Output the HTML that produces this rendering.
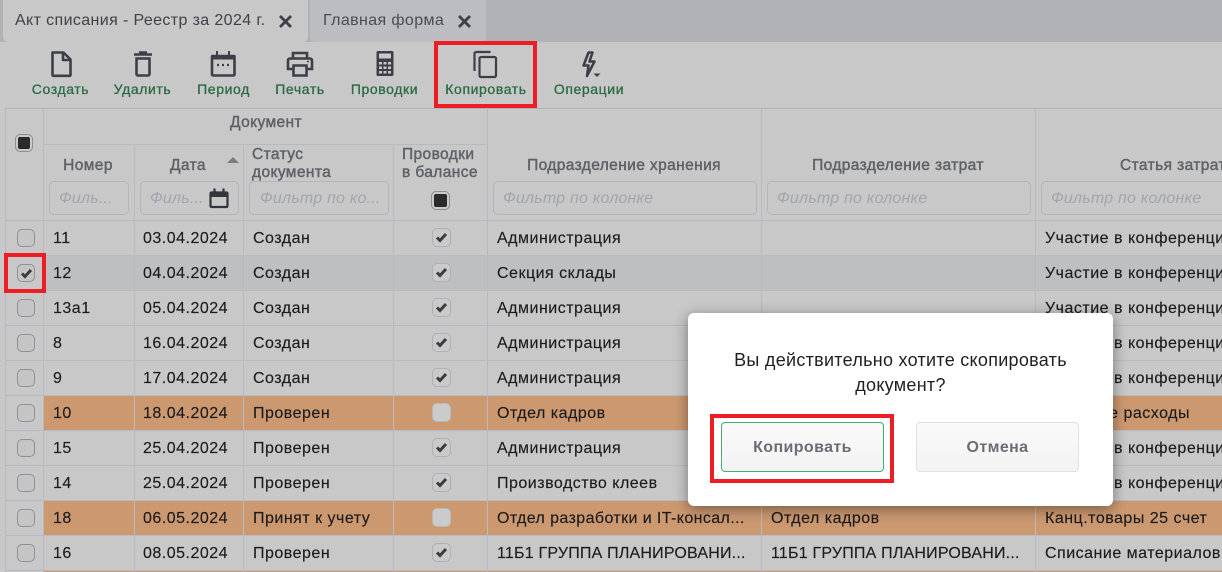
<!DOCTYPE html>
<html lang="ru"><head><meta charset="utf-8"><title>Акт списания</title>
<style>
html,body{margin:0;padding:0}
body{width:1222px;height:572px;overflow:hidden;position:relative;background:#c8c8c8;font-family:"Liberation Sans","Noto Sans CJK SC",sans-serif;font-size:16px;color:#1c1c1c}
.a{position:absolute;white-space:nowrap}
.tabbar{left:0;top:0;width:1222px;height:42px;background:#b0b2b5}
.tab{top:0;height:42px;background:#bcbdc0;border-radius:0 0 5px 5px;line-height:42px;color:#45484f;font-size:16px;letter-spacing:.38px}
.lb{top:81px;height:16px;line-height:16px;transform:translateX(-50%);font-size:14px;letter-spacing:.6px;color:#2b6a45;-webkit-text-stroke:.3px #2b6a45}
.v{width:1px;background:#b9bac0}
.h{height:1px;background:#b9bac0;left:5px;width:1217px}
.hd{font-size:15.5px;letter-spacing:.4px;color:#5f6268;-webkit-text-stroke:.45px #5f6268;line-height:18px}
.c{transform:translateX(-50%)}
.f{top:181px;height:32px;border:1px solid #b4b6be;border-radius:5px;line-height:34px;font-style:italic;color:#a2a5ad;font-size:16px;letter-spacing:.2px;padding-left:9px;overflow:hidden}
.row{position:absolute;left:44px;width:1178px;height:34px;line-height:35px}
.row span{position:absolute;white-space:nowrap;top:0;letter-spacing:.5px;-webkit-text-stroke:.15px #1c1c1c}
.g{background:#c8c8c8}.s{background:#bebfc1}.o{background:#cc9870}
.n{left:9px}.d{left:99px}.st{left:209px}.p1{left:453px}.p2{left:727px}.p3{left:1001px}
.row .u{letter-spacing:.2px}
.row .t{letter-spacing:.4px}
.cb{position:absolute;left:17px;width:16px;height:16px;border:1px solid #8f9095;border-radius:5px;background:#c5c5c5}
.bb{position:absolute;left:432px;width:17px;height:17px;border:1px solid #b0b1b7;border-radius:5px;background:#cacaca}
.bo{border-color:#b8b8bc;background:#cbcbcb}
.cb svg,.bb svg{position:absolute;left:1px;top:1px;width:15px;height:15px}
.ind{width:16px;height:16px;border:1px solid #8d8e93;border-radius:5px;background:#c9c9c9}
.ind i{position:absolute;left:2px;top:2px;width:12px;height:12px;background:#2a2a2b;border-radius:2px}
.red{border:4px solid #ee1c25;box-sizing:border-box}
.modal{left:688px;top:313px;width:425px;height:193px;background:#fff;border-radius:6px;box-shadow:0 3px 14px rgba(0,0,0,.42)}
.btn{top:422px;width:163px;height:50px;box-sizing:border-box;border-radius:4px;background:linear-gradient(#fafafa,#f3f3f4);text-align:center;line-height:49px;font-size:16px;font-weight:bold;letter-spacing:.4px;color:#6a6d74}
</style></head><body>
<div class="a tabbar"></div>
<div class="a tab" style="left:3px;width:305px;background:#c8c8c8;padding-left:12px;box-sizing:border-box;color:#3f4148">Акт списания - Реестр за 2024 г.</div>
<div class="a tab" style="left:310px;width:176px;padding-left:13px;box-sizing:border-box;color:#494c53">Главная форма</div>
<svg class="a" style="left:0;top:0" width="500" height="42"><path d="M280 16l11 11M291 16l-11 11M459 16l11 11M470 16l-11 11" stroke="#3f4148" stroke-width="2.8" fill="none"/></svg>

<svg class="a" style="left:0;top:42px" width="640" height="40" fill="none" stroke="#3d3f47" stroke-width="2.6">
<path d="M52.500 10.500h11l7 7v15.500a.8.8 0 0 1-.8.8h-16.400a.8.8 0 0 1-.8-.8zM63 10v8h8" stroke-linejoin="round"/>
<path d="M134 12.500h18M139 10.500h8" /><path d="M136.500 16.500h13v15.500a1.500 1.500 0 0 1-1.500 1.500h-10a1.500 1.500 0 0 1-1.500-1.500z"/>
<path d="M212.500 14h21.500a.5.5 0 0 1 .5.5V32.500a1 1 0 0 1-1 1h-20.500a1 1 0 0 1-1-1V14.500a.5.5 0 0 1 .5-.5z"/><path d="M212 14h22v3.500h-22z" fill="#3d3f47" stroke="none"/><path d="M217 9v5M229 9v5" stroke-width="2"/><path d="M217 23h2M222 23h2M227 23h2" stroke-width="2.200"/>
<path d="M293 17v-6h14v6M293 27h-5v-8.500a2 2 0 0 1 2-2h20a2 2 0 0 1 2 2V27h-5"/><path d="M293.500 23.500h13v10h-13z"/><path d="M307 19.500h2" stroke-width="1.500"/>
<path d="M378 9h14a1.500 1.500 0 0 1 1.500 1.500v22a1.500 1.500 0 0 1-1.500 1.500h-14a1.500 1.500 0 0 1-1.500-1.500v-22A1.500 1.500 0 0 1 378 9z" fill="#3d3f47" stroke="none"/>
<path d="M379 11.500h12v5h-12zM379 20h3v2.500h-3zM383.500 20h3v2.500h-3zM388 20h3v2.500h-3zM379 24.500h3v2.500h-3zM383.500 24.500h3v2.500h-3zM388 24.500h3v2.500h-3zM379 29h3v2.500h-3zM383.500 29h3v2.500h-3zM388 29h3v2.500h-3z" fill="#c8c8c8" stroke="none"/>
<path d="M490.500 10H476a1.500 1.500 0 0 0-1.500 1.500V29" stroke-width="2.200"/><path d="M481 15h13.500a1.500 1.500 0 0 1 1.500 1.500v17a1.500 1.500 0 0 1-1.500 1.500H481a1.500 1.500 0 0 1-1.500-1.500v-17A1.500 1.500 0 0 1 481 15z" stroke-width="2.200"/>
<path d="M588.500 10.500l-5 13h5l-1.500 10.500 7.500-14.500h-5l3-9z" stroke-width="2.500" stroke-linejoin="round"/>
<path d="M593.500 31.500h7l-3.500 3.500z" fill="#3d3f47" stroke="none"/>
</svg>
<div class="a lb" style="left:60.5px">Создать</div>
<div class="a lb" style="left:142.5px">Удалить</div>
<div class="a lb" style="left:223.500px">Период</div>
<div class="a lb" style="left:300px">Печать</div>
<div class="a lb" style="left:384.500px">Проводки</div>
<div class="a lb" style="left:486px">Копировать</div>
<div class="a lb" style="left:589px">Операции</div>

<div class="a h" style="top:108px;background:#b3b4bb"></div>
<div class="a" style="left:5px;top:108px;width:1px;height:464px;background:#b9bac0"></div>
<div class="a v" style="left:43px;top:108px;height:464px"></div>
<div class="a h" style="left:43px;width:444px;top:144px;"></div>
<div class="a v" style="left:134px;top:144px;height:76px"></div>
<div class="a v" style="left:243px;top:144px;height:76px"></div>
<div class="a v" style="left:393px;top:144px;height:76px"></div>
<div class="a v" style="left:487px;top:108px;height:112px"></div>
<div class="a v" style="left:761px;top:108px;height:112px"></div>
<div class="a v" style="left:1035px;top:108px;height:112px"></div>

<div class="a ind" style="left:15px;top:134px"><i></i></div>
<div class="a hd c" style="left:266px;top:114px">Документ</div>
<div class="a hd c" style="left:88px;top:157px">Номер</div>
<div class="a hd c" style="left:188px;top:157px">Дата</div>
<svg class="a" style="left:226px;top:156px" width="14" height="8"><path d="M1 7h12L7 1z" fill="#7b7c80"/></svg>
<div class="a hd" style="left:252px;top:146px">Статус<br>документа</div>
<div class="a hd" style="left:402px;top:146px">Проводки<br>в балансе</div>
<div class="a ind" style="left:431px;top:191px;width:17px;height:17px"><i style="width:13px;height:13px"></i></div>
<div class="a hd c" style="left:624px;top:157px">Подразделение хранения</div>
<div class="a hd c" style="left:898px;top:157px">Подразделение затрат</div>
<div class="a hd" style="left:1120px;top:157px">Статья затрат</div>

<div class="a f" style="left:49px;width:69px">Филь...</div>
<div class="a f" style="left:140px;width:88px">Филь...</div>
<svg class="a" style="left:209px;top:187px" width="20" height="22"><path d="M2.500 5.500h15a1 1 0 0 1 1 1V19a1 1 0 0 1-1 1h-15a1 1 0 0 1-1-1V6.500a1 1 0 0 1 1-1z" fill="none" stroke="#33353b" stroke-width="2.200"/><path d="M1.500 5h17v5h-17z" fill="#33353b"/><path d="M5.500 1.500v4M14.500 1.500v4" stroke="#33353b" stroke-width="2.200"/></svg>
<div class="a f" style="left:249px;padding-left:10px;width:128px">Фильтр по ко...</div>
<div class="a f" style="left:493px;width:253px">Фильтр по колонке</div>
<div class="a f" style="left:767px;width:253px">Фильтр по колонке</div>
<div class="a f" style="left:1041px;width:253px">Фильтр по колонке</div>

<svg width="0" height="0" style="position:absolute"><defs><symbol id="k" viewBox="0 0 15 15"><path d="M3 7.500l3 3 6-6.500" fill="none" stroke="#3c3c3d" stroke-width="3"/></symbol></defs></svg>

<div class="a h" style="top:220px;left:5px"></div>
<div class="row g" style="top:221px"><span class="n">11</span><span class="d">03.04.2024</span><span class="st">Создан</span><span class="p1">Администрация</span><span class="p3">Участие в конференции</span></div>
<div class="row s" style="top:256px"><span class="n">12</span><span class="d">04.04.2024</span><span class="st">Создан</span><span class="p1">Секция склады</span><span class="p3">Участие в конференции</span></div>
<div class="row g" style="top:291px"><span class="n">13а1</span><span class="d">05.04.2024</span><span class="st">Создан</span><span class="p1">Администрация</span><span class="p3">Участие в конференции</span></div>
<div class="row g" style="top:326px"><span class="n">8</span><span class="d">16.04.2024</span><span class="st">Создан</span><span class="p1">Администрация</span><span class="p3">Участие в конференции</span></div>
<div class="row g" style="top:361px"><span class="n">9</span><span class="d">17.04.2024</span><span class="st">Создан</span><span class="p1">Администрация</span><span class="p3">Участие в конференции</span></div>
<div class="row o" style="top:396px"><span class="n">10</span><span class="d">18.04.2024</span><span class="st">Проверен</span><span class="p1">Отдел кадров</span><span style="right:32px">Прочие расходы</span></div>
<div class="row g" style="top:431px"><span class="n">15</span><span class="d">25.04.2024</span><span class="st">Проверен</span><span class="p1">Администрация</span><span class="p3">Участие в конференции</span></div>
<div class="row g" style="top:466px"><span class="n">14</span><span class="d">25.04.2024</span><span class="st">Проверен</span><span class="p1">Производство клеев</span><span class="p3">Участие в конференции</span></div>
<div class="row o" style="top:501px"><span class="n">18</span><span class="d">06.05.2024</span><span class="st">Принят к учету</span><span class="p1 t">Отдел разработки и IT-консал...</span><span class="p2">Отдел кадров</span><span class="p3">Канц.товары 25 счет</span></div>
<div class="row g" style="top:536px"><span class="n">16</span><span class="d">08.05.2024</span><span class="st">Проверен</span><span class="p1 u">11Б1 ГРУППА ПЛАНИРОВАНИ...</span><span class="p2 u">11Б1 ГРУППА ПЛАНИРОВАНИ...</span><span class="p3">Списание материалов</span></div>
<div class="a" style="left:44px;top:571px;width:1178px;height:1px;background:#cc9870"></div>

<div class="a h" style="top:255px"></div><div class="a h" style="top:290px"></div><div class="a h" style="top:325px"></div><div class="a h" style="top:360px"></div><div class="a h" style="top:395px"></div><div class="a h" style="top:430px"></div><div class="a h" style="top:465px"></div><div class="a h" style="top:500px"></div><div class="a h" style="top:535px"></div><div class="a h" style="top:570px"></div>
<div class="a v" style="left:134px;top:220px;height:352px"></div>
<div class="a v" style="left:243px;top:220px;height:352px"></div>
<div class="a v" style="left:393px;top:220px;height:352px"></div>
<div class="a v" style="left:487px;top:220px;height:352px"></div>
<div class="a v" style="left:761px;top:220px;height:352px"></div>
<div class="a v" style="left:1035px;top:220px;height:352px"></div>

<div class="cb" style="top:229px"></div><div class="cb" style="top:264px"><svg><use href="#k"/></svg></div><div class="cb" style="top:299px"></div><div class="cb" style="top:334px"></div><div class="cb" style="top:369px"></div><div class="cb" style="top:404px"></div><div class="cb" style="top:439px"></div><div class="cb" style="top:474px"></div><div class="cb" style="top:509px"></div><div class="cb" style="top:544px"></div>
<div class="bb" style="top:228px"><svg><use href="#k"/></svg></div>
<div class="bb" style="top:263px"><svg><use href="#k"/></svg></div>
<div class="bb" style="top:298px"><svg><use href="#k"/></svg></div>
<div class="bb" style="top:333px"><svg><use href="#k"/></svg></div>
<div class="bb" style="top:368px"><svg><use href="#k"/></svg></div>
<div class="bb bo" style="top:403px"></div>
<div class="bb" style="top:438px"><svg><use href="#k"/></svg></div>
<div class="bb" style="top:473px"><svg><use href="#k"/></svg></div>
<div class="bb bo" style="top:508px"></div>
<div class="bb" style="top:543px"><svg><use href="#k"/></svg></div>

<div class="a red" style="left:434px;top:41px;width:103px;height:67px"></div>
<div class="a red" style="left:4px;top:253px;width:42px;height:40px"></div>

<div class="a modal"></div>
<div class="a" style="left:688px;top:348px;width:425px;text-align:center;font-size:18px;letter-spacing:.28px;line-height:25px;color:#1f1f1f;white-space:normal">Вы действительно хотите скопировать<br>документ?</div>
<div class="a btn" style="left:721px;border:1px solid #3fae72">Копировать</div>
<div class="a btn" style="left:916px;border:1px solid #dfdfe8">Отмена</div>
<div class="a red" style="left:710px;top:414px;width:184px;height:69px"></div>
</body></html>
